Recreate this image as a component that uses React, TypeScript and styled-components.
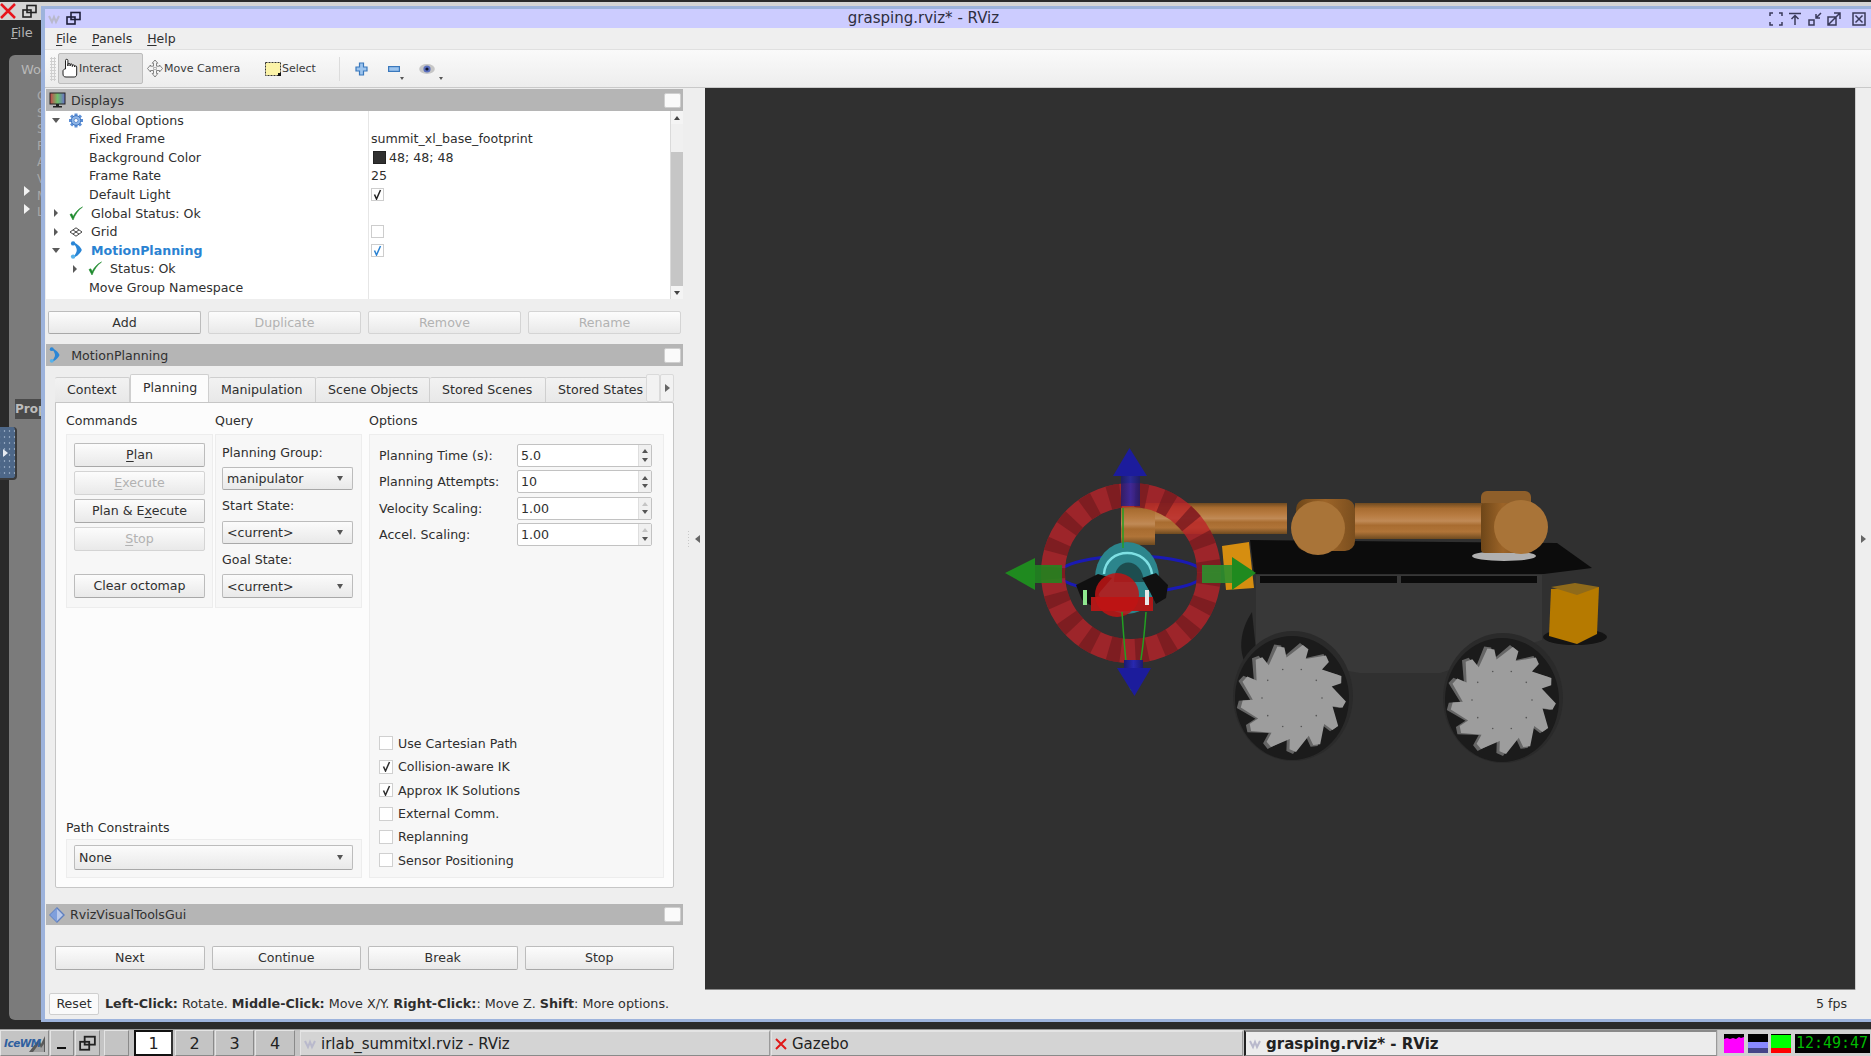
import React from "react";
import styled, { createGlobalStyle } from "styled-components";

const GlobalStyle = createGlobalStyle`
  html, body { margin: 0; padding: 0; overflow: hidden; background: #2a2a2a; }
  * { box-sizing: border-box; }
  body { font-family: "DejaVu Sans", "Liberation Sans", sans-serif; font-size: 12.6px; color: #2e2e2e; }
`;

const Desktop = styled.div`
  width: 1871px;
  height: 1056px;
  display: flex;
  flex-direction: column;
  background: #2a2a2a;
  overflow: hidden;
`;
const Stage = styled.div`
  position: relative;
  flex: 1;
`;

/* window behind the main one, only its left edge shows */
const BackWindow = styled.div`
  position: absolute;
  inset: 2px 0 0 0;
  display: flex;
  flex-direction: column;
`;
const BackTitle = styled.div`
  height: 18px;
  background: #d4d4d4;
  display: flex;
  align-items: center;
  gap: 4px;
`;
const BackMenu = styled.div`
  height: 35px;
  padding: 4px 0 0 11px;
  color: #b4b4b4;
  font-size: 13px;
  line-height: 17px;
  u { text-decoration-thickness: 1px; }
`;
const BackPanel = styled.div`
  position: relative;
  margin-left: 9px;
  width: 32px;
  height: 965px;
  background: #7b7b7b;
  border-radius: 6px 0 0 6px;
  padding: 6px 0 0 12px;
  color: #b8b8b8;
  font-size: 13px;
  line-height: 17px;
  overflow: hidden;
`;
const BackList = styled.div`
  margin: 10px 0 0 16px;
  font-size: 12px;
  line-height: 16.6px;
  color: #a8a8a8;
`;
const BackArrows = styled.div`
  position: absolute;
  left: 15px;
  top: 131px;
  display: flex;
  flex-direction: column;
  gap: 8px;
`;
const WhiteArrow = styled.span`
  display: block;
  width: 0;
  height: 0;
  border-left: 6px solid #f2f2f2;
  border-top: 5px solid transparent;
  border-bottom: 5px solid transparent;
`;
const PropTag = styled.div`
  position: absolute;
  left: 6px;
  top: 344px;
  width: 26px;
  height: 20px;
  background: #4a4a4a;
  color: #bcbcbc;
  font-weight: bold;
  font-size: 12px;
  line-height: 20px;
  overflow: hidden;
`;
const SideHandle = styled.div`
  position: absolute;
  left: 0;
  top: 427px;
  width: 17px;
  height: 53px;
  background:
    radial-gradient(#8ea3bd 0.9px, transparent 1.1px) 2px 1px / 5px 6px,
    #4d6788;
  border-radius: 0 4px 4px 0;
  border-right: 2px solid #3a3a3a;
  border-bottom: 2px solid #3a3a3a;
  display: flex;
  align-items: center;
  justify-content: center;
  padding-right: 5px;
  &::after {
    content: "";
    border-left: 5px solid #e6ebf2;
    border-top: 4px solid transparent;
    border-bottom: 4px solid transparent;
  }
`;

/* main rviz window */
const MainWindow = styled.div`
  position: absolute;
  left: 41px;
  top: 6px;
  right: 0;
  height: 1016px;
  display: flex;
  flex-direction: column;
  background: #eeeeee;
  border-top: 3px solid #9db3dc;
  border-left: 4px solid #9db3dc;
  border-bottom: 3px solid #9db3dc;
`;
const TitleBar = styled.div`
  position: relative;
  height: 19px;
  flex: none;
  background: #ccccff;
  display: flex;
  align-items: center;
  justify-content: space-between;
  padding: 0 5px 0 3px;
`;
const TitleText = styled.div`
  position: absolute;
  left: 0;
  right: 69px;
  top: 0;
  text-align: center;
  font-size: 15px;
  line-height: 19px;
  color: #2e2e3e;
`;
const TitleGroup = styled.div`
  display: flex;
  align-items: center;
  gap: ${(p: { $gap?: number }) => p.$gap ?? 6}px;
`;
const MenuBar = styled.div`
  height: 22px;
  flex: none;
  display: flex;
  align-items: center;
  background: #efefef;
  border-bottom: 1px solid #e0e0e0;
  padding-left: 11px;
  font-size: 12.5px;
  gap: 15px;
  u { text-decoration-thickness: 1px; text-underline-offset: 2px; }
`;
const Toolbar = styled.div`
  height: 38px;
  flex: none;
  display: flex;
  align-items: center;
  background: linear-gradient(#fafafa, #ededed);
  border-bottom: 1px solid #c9c9c9;
  padding-left: 5px;
  font-size: 11px;
  color: #3a3a3a;
`;
const Grip = styled.div`
  width: 6px;
  height: 24px;
  margin-right: 2px;
  background-image: radial-gradient(#cfcfcf 1px, transparent 1.2px);
  background-size: 3px 3px;
`;
const ToolButton = styled.div<{ $active?: boolean; $w: number }>`
  width: ${(p) => p.$w}px;
  height: 31px;
  display: flex;
  align-items: center;
  gap: ${(p) => (p.$active ? 0 : 1)}px;
  padding-left: 3px;
  border-radius: 2px;
  background: ${(p) => (p.$active ? "#dcdcdc" : "transparent")};
  border: 1px solid ${(p) => (p.$active ? "#bdbdbd" : "transparent")};
`;
const ToolSep = styled.div`
  width: 1px;
  height: 24px;
  margin: 0 15px 0 0;
  background: #dcdcdc;
`;
const IconTool = styled.div<{ $w: number }>`
  position: relative;
  width: ${(p) => p.$w}px;
  height: 22px;
  display: flex;
  align-items: center;
`;
const MiniDrop = styled.span`
  position: absolute;
  right: ${(p: { $r?: number }) => p.$r ?? 0}px;
  bottom: 0;
  border-top: 3px solid #555;
  border-left: 2.5px solid transparent;
  border-right: 2.5px solid transparent;
`;

const Body = styled.div`
  flex: 1;
  display: flex;
  min-height: 0;
`;
const Panels = styled.div`
  width: 638px;
  flex: none;
  padding-left: 1px;
  display: flex;
  flex-direction: column;
`;
const DockHeader = styled.div<{ $top?: number; $h?: number }>`
  height: ${(p) => p.$h ?? 22}px;
  flex: none;
  margin-top: ${(p) => p.$top ?? 0}px;
  display: flex;
  align-items: center;
  background: #b5b5b5;
  padding: 0 2px 0 3px;
  color: #303030;
`;
const DockTitle = styled.span<{ $left?: number }>`
  flex: 1;
  margin-left: ${(p) => p.$left ?? 5}px;
`;
const DockClose = styled.span`
  width: 17px;
  height: 15px;
  background: #fafafa;
  border: 1px solid #cfcfcf;
  border-radius: 2px;
`;

const TreeView = styled.div`
  height: 188px;
  flex: none;
  display: flex;
  background: #ffffff;
`;
const TreeGrid = styled.div`
  flex: 1;
  display: grid;
  grid-template-columns: 322px 1fr;
  grid-auto-rows: 18.55px;
  background: linear-gradient(#e6e6e6, #e6e6e6) 322px 0 / 1px 100% no-repeat;
`;
const TreeName = styled.div<{ $pad: number; $blue?: boolean }>`
  display: flex;
  align-items: center;
  padding-left: ${(p) => p.$pad}px;
  white-space: nowrap;
  font-weight: ${(p) => (p.$blue ? "bold" : "normal")};
  color: ${(p) => (p.$blue ? "#2a82d2" : "#303030")};
`;
const TreeValue = styled.div`
  display: flex;
  align-items: center;
  padding-left: 3px;
  white-space: nowrap;
`;
const Twist = styled.span<{ $open?: boolean }>`
  width: 16px;
  height: 16px;
  flex: none;
  display: flex;
  align-items: center;
  justify-content: center;
  &::after {
    content: "";
    ${(p) =>
      p.$open
        ? `border-top: 5px solid #5a5a5a; border-left: 4px solid transparent; border-right: 4px solid transparent;`
        : `border-left: 4px solid #5a5a5a; border-top: 4px solid transparent; border-bottom: 4px solid transparent;`}
  }
`;
const TreeIcon = styled.span`
  width: 16px;
  height: 16px;
  flex: none;
  margin: 0 7px 0 4px;
  display: flex;
  align-items: center;
  justify-content: center;
`;
const Swatch = styled.span`
  width: 13px;
  height: 13px;
  margin: 0 3px 0 2px;
  background: #303030;
  border: 1px solid #222;
`;
const TreeCheck = styled.span<{ $blue?: boolean }>`
  width: 13px;
  height: 13px;
  background: #fff;
  border: 1px solid #cdcdcd;
  display: flex;
  align-items: center;
  justify-content: center;
  color: ${(p) => (p.$blue ? "#2a82d2" : "#222")};
`;
const ScrollBar = styled.div`
  width: 13px;
  flex: none;
  display: flex;
  flex-direction: column;
  background: #c6c6c6;
  border-left: 1px solid #dadada;
`;
const ScrollEnd = styled.div<{ $down?: boolean }>`
  height: 13px;
  background: #f4f4f4;
  display: flex;
  align-items: center;
  justify-content: center;
  &::after {
    content: "";
    border-left: 3.5px solid transparent;
    border-right: 3.5px solid transparent;
    ${(p) => (p.$down ? "border-top: 4px solid #444;" : "border-bottom: 4px solid #444;")}
  }
`;
const ScrollThumb = styled.div`
  height: 28px;
  background: #f0f0f0;
`;
const ScrollTrack = styled.div`
  flex: 1;
`;

const ButtonRow = styled.div<{ $top: number; $side: number; $h: number }>`
  flex: none;
  height: ${(p) => p.$h}px;
  margin: ${(p) => p.$top}px ${(p) => p.$side}px 0 ${(p) => p.$side}px;
  display: grid;
  grid-template-columns: repeat(4, 1fr);
  gap: 7px;
`;
const PushButton = styled.div<{ $off?: boolean; $h?: number; $top?: number }>`
  height: ${(p) => (p.$h ? `${p.$h}px` : "auto")};
  margin-top: ${(p) => p.$top ?? 0}px;
  display: flex;
  align-items: center;
  justify-content: center;
  padding-bottom: 1px;
  background: linear-gradient(#fcfcfc, #e9e9e9);
  border: 1px solid #bcbcbc;
  border-bottom-color: #a8a8a8;
  border-radius: 2px;
  color: ${(p) => (p.$off ? "#b2b2b2" : "#303030")};
  ${(p) => (p.$off ? "border-color: #d4d4d4;" : "")}
  white-space: nowrap;
  u { text-decoration-thickness: 1px; text-underline-offset: 2px; }
`;

const TabArea = styled.div`
  flex: none;
  margin: 8px 9px 0 9px;
  height: 514px;
  display: flex;
  flex-direction: column;
`;
const TabBar = styled.div`
  height: 28px;
  flex: none;
  display: flex;
  align-items: flex-end;
`;
const TabStrip = styled.div`
  width: 591px;
  display: flex;
  align-items: flex-end;
  overflow: hidden;
  height: 29px;
  margin-bottom: -1px;
`;
const Tab = styled.div<{ $on?: boolean; $w: number }>`
  width: ${(p) => p.$w}px;
  flex: none;
  height: ${(p) => (p.$on ? 29 : 26)}px;
  display: flex;
  align-items: center;
  padding-left: 12px;
  white-space: nowrap;
  background: ${(p) => (p.$on ? "#fcfcfc" : "linear-gradient(#f2f2f2, #e8e8e8)")};
  border: 1px solid #cfcfcf;
  border-bottom: ${(p) => (p.$on ? "none" : "1px solid #c4c4c4")};
  border-left: ${(p) => (p.$on ? "1px solid #cfcfcf" : "none")};
  border-radius: 2px 2px 0 0;
  padding-bottom: ${(p) => (p.$on ? 3 : 2)}px;
`;
const TabScroll = styled.div<{ $off?: boolean }>`
  width: 14px;
  height: 28px;
  flex: none;
  background: #f2f2f2;
  border: 1px solid #dadada;
  border-radius: 2px;
  display: flex;
  align-items: center;
  justify-content: center;
`;
const TabPane = styled.div`
  flex: 1;
  display: grid;
  grid-template-columns: 296px 295px;
  column-gap: 7px;
  padding: 9px 10px 9px 10px;
  background: #fcfcfc;
  border: 1px solid #c6c6c6;
  border-radius: 0 2px 2px 2px;
  min-height: 0;
`;
const LeftColumn = styled.div`
  display: flex;
  flex-direction: column;
  justify-content: space-between;
`;
const TopGroups = styled.div`
  display: grid;
  grid-template-columns: 147px 147px;
  gap: 2px;
`;
const GroupColumn = styled.div`
  display: flex;
  flex-direction: column;
`;
const GroupLabel = styled.div<{ $line?: number }>`
  height: 22px;
  line-height: ${(p) => p.$line ?? 18}px;
`;
const GroupBox = styled.div`
  background: #f7f7f7;
  border: 1px solid #ededed;
`;
const CommandBox = styled(GroupBox)`
  height: 174px;
  padding: 8px 7px;
  display: flex;
  flex-direction: column;
  gap: 4px;
`;
const QueryBox = styled(GroupBox)`
  height: 174px;
  padding: 2px 8px 0 6px;
  display: flex;
  flex-direction: column;
`;
const FieldLabel = styled.div<{ $h: number }>`
  height: ${(p) => p.$h}px;
  display: flex;
  align-items: center;
`;
const Combo = styled.div<{ $h?: number }>`
  height: ${(p) => p.$h ?? 24}px;
  flex: none;
  display: flex;
  align-items: center;
  justify-content: space-between;
  padding: 0 9px 0 4px;
  background: linear-gradient(#fbfbfb, #e9e9e9);
  border: 1px solid #bcbcbc;
  border-bottom-color: #a8a8a8;
  border-radius: 2px;
  &::after {
    content: "";
    border-top: 5px solid #555;
    border-left: 3.5px solid transparent;
    border-right: 3.5px solid transparent;
  }
`;
const PathBox = styled(GroupBox)`
  height: 39px;
  padding: 5px 8px 0 7px;
`;
const OptionsColumn = styled.div`
  display: flex;
  flex-direction: column;
`;
const OptionsBox = styled(GroupBox)`
  flex: 1;
  display: flex;
  flex-direction: column;
  justify-content: space-between;
  padding: 9px 10px 5px 9px;
`;
const SpinGrid = styled.div`
  display: grid;
  grid-template-columns: 138px 135px;
  grid-auto-rows: 23px;
  row-gap: 3.3px;
  align-items: center;
`;
const SpinBox = styled.div`
  height: 23px;
  display: flex;
  background: #fff;
  border: 1px solid #c2c2c2;
  border-radius: 2px;
`;
const SpinValue = styled.div`
  flex: 1;
  display: flex;
  align-items: center;
  padding-left: 3px;
`;
const SpinArrows = styled.div`
  width: 13px;
  display: flex;
  flex-direction: column;
  justify-content: space-evenly;
  align-items: center;
  background: #f0f0f0;
  border-left: 1px solid #dedede;
`;
const SpinUp = styled.span<{ $off?: boolean }>`
  border-bottom: 4px solid ${(p) => (p.$off ? "#c4c4c4" : "#555")};
  border-left: 3px solid transparent;
  border-right: 3px solid transparent;
`;
const SpinDown = styled.span`
  border-top: 4px solid #555;
  border-left: 3px solid transparent;
  border-right: 3px solid transparent;
`;
const CheckList = styled.div`
  display: grid;
  grid-auto-rows: 23.4px;
`;
const CheckRow = styled.div`
  display: flex;
  align-items: center;
  gap: 5px;
`;
const CheckMark = styled.span`
  width: 14px;
  height: 14px;
  flex: none;
  background: #fff;
  border: 1px solid #d0d0d0;
  display: flex;
  align-items: center;
  justify-content: center;
`;

const HandleColumn = styled.div`
  width: 22px;
  flex: none;
  display: flex;
  align-items: center;
  justify-content: flex-end;
  gap: 5px;
  padding-right: 5px;
`;
const HandleDots = styled.span`
  width: 3px;
  height: 18px;
  background-image: radial-gradient(#c8c8c8 0.8px, transparent 1px);
  background-size: 3px 3px;
`;
const LeftHandle = styled.span`
  border-right: 5px solid #666;
  border-top: 4px solid transparent;
  border-bottom: 4px solid transparent;
`;
const RightHandle = styled.span`
  border-left: 5px solid #666;
  border-top: 4px solid transparent;
  border-bottom: 4px solid transparent;
`;
const Canvas = styled.div`
  width: 1150px;
  flex: none;
  background: #303030;
  border-bottom: 1px solid #8a8a8a;
  svg { display: block; }
`;
const RightDock = styled.div`
  flex: 1;
  display: flex;
  align-items: center;
  justify-content: center;
  border-left: 1px solid #cccccc;
`;

const StatusBar = styled.div`
  height: 29px;
  flex: none;
  display: flex;
  align-items: center;
  padding: 0 24px 2px 4px;
  background: #eeeeee;
`;
const ResetButton = styled.div`
  width: 50px;
  height: 22px;
  display: flex;
  align-items: center;
  justify-content: center;
  background: #fafafa;
  border: 1px solid #cfcfcf;
  border-radius: 2px;
  margin-right: 6px;
`;
const Hint = styled.div`
  flex: 1;
  font-size: 12.75px;
  white-space: nowrap;
`;
const Fps = styled.div`
  white-space: nowrap;
`;

/* icewm task bar */
const Taskbar = styled.div`
  height: 27px;
  flex: none;
  display: flex;
  background: #c4c4c4;
  border-top: 1px solid #9a9a9a;
  font-size: 15px;
  color: #222;
`;
const TaskCell = styled.div<{ $w: number; $gap?: number }>`
  width: ${(p) => p.$w}px;
  flex: none;
  margin-right: ${(p) => p.$gap ?? 1}px;
  display: flex;
  align-items: center;
  justify-content: center;
  background: #c4c4c4;
  border-top: 1px solid #e4e4e4;
  border-left: 1px solid #e4e4e4;
  border-bottom: 1px solid #8a8a8a;
  border-right: 1px solid #8a8a8a;
  position: relative;
`;
const LogoCell = styled(TaskCell)`
  justify-content: flex-start;
  padding-left: 3px;
  overflow: hidden;
  svg { position: absolute; right: 1px; top: 3px; }
`;
const Logo = styled.span`
  position: relative;
  z-index: 1;
  font-size: 10.5px;
  font-weight: bold;
  font-style: italic;
  color: #2f5f9f;
  letter-spacing: -0.5px;
`;
const WorkButton = styled(TaskCell)<{ $on?: boolean }>`
  background: ${(p) => (p.$on ? "#ffffff" : "#c4c4c4")};
  ${(p) => (p.$on ? "border: 2px solid #111; border-right-color: #333;" : "")}
  font-size: 16px;
`;
const TaskButton = styled.div<{ $w: number; $on?: boolean }>`
  width: ${(p) => p.$w}px;
  flex: none;
  margin-right: 1px;
  display: flex;
  align-items: center;
  gap: 5px;
  padding-left: 3px;
  white-space: nowrap;
  background: ${(p) => (p.$on ? "#ececec" : "#d4d4d4")};
  font-weight: ${(p) => (p.$on ? "bold" : "normal")};
  font-size: 15px;
  border-top: 2px solid ${(p) => (p.$on ? "#8a8a8a" : "#e4e4e4")};
  border-left: ${(p) => (p.$on ? "2px solid #222" : "1px solid #e4e4e4")};
  border-right: 1px solid #9a9a9a;
  border-bottom: 1px solid #8a8a8a;
`;
const Tray = styled.div`
  flex: 1;
  display: flex;
  align-items: center;
  gap: 3.5px;
  padding-left: 6px;
  background: #d0d0d0;
`;
const Clock = styled.div`
  width: 75px;
  height: 19px;
  background: #000;
  color: #00bb00;
  font-family: "DejaVu Sans Mono", monospace;
  font-size: 15px;
  line-height: 19px;
  text-align: center;
  white-space: nowrap;
`;

/* ---------- small drawings ---------- */
const FaintLogo = () => (
  <svg width="12" height="12" viewBox="0 0 12 12">
    <path d="M1 3l3 6 2-5 2 5 3-6" fill="none" stroke="#b9b9cc" strokeWidth="2" />
  </svg>
);
const RestoreIcon = ({ s = 15, c = "#1e1e3a" }: { s?: number; c?: string }) => (
  <svg width={s} height={s} viewBox="0 0 15 15">
    <rect x="5" y="1.500" width="9" height="7" fill="none" stroke={c} strokeWidth="1.600" />
    <rect x="1" y="6" width="8" height="7" fill="none" stroke={c} strokeWidth="1.600" />
  </svg>
);
const TitleButton = ({ d, $left }: { d: string; $left?: number }) => (
  <svg width="14" height="14" viewBox="0 0 14 14" style={$left ? { marginLeft: $left } : undefined}>
    <path d={d} fill="none" stroke="#3a3a5a" strokeWidth="1.500" />
  </svg>
);
const HandIcon = () => (
  <svg width="17" height="21" viewBox="0 0 17 21">
    <path
      d="M3.500 11V2.500a1.200 1.200 0 0 1 2.400 0V8V6.500a1.100 1.100 0 0 1 2.200 0V8V7a1.100 1.100 0 0 1 2.200 0V8.500V8a1.100 1.100 0 0 1 2.200 0v1a1.100 1.100 0 0 1 2.200 0v7c0 2-1 3-2.500 3H4C2 19 1 18 1 16v-3c0-1 1-2 2.500-2z"
      fill="#fff"
      stroke="#222"
      strokeWidth="1"
    />
  </svg>
);
const MoveIcon = () => (
  <svg width="16" height="19" viewBox="0 0 16 19">
    <path
      d="M8 1l2.800 3.200H9.500v3h3V6l3 3.500-3 3.500v-1.500h-3v3h1.300L8 18l-2.800-3.500h1.300v-3h-3V13l-3-3.500 3-3.500v1.200h3v-3H5.200z"
      fill="#f4f4f4"
      stroke="#777"
      strokeWidth="0.900"
    />
    <path d="M6.500 8.500h3v2h-3z" fill="none" stroke="#999" strokeWidth="0.700" />
  </svg>
);
const SelectIcon = () => (
  <svg width="16" height="14" viewBox="0 0 16 14">
    <rect x="0.500" y="0.500" width="15" height="13" fill="#fbf3a8" stroke="#333" strokeDasharray="2 1" />
    <rect x="13" y="11" width="3" height="3" fill="#111" />
  </svg>
);
const PlusIcon = () => (
  <svg width="13" height="14" viewBox="0 0 13 14">
    <path d="M4.500 1h4v4h3.500v4H8.500v4h-4V9H1V5h3.500z" fill="#9cc4ee" stroke="#3a78bc" strokeWidth="1.200" />
  </svg>
);
const MinusIcon = () => (
  <svg width="12" height="6" viewBox="0 0 12 6">
    <rect x="0.600" y="0.600" width="10.800" height="4.800" fill="#9cc4ee" stroke="#3a78bc" strokeWidth="1.200" />
  </svg>
);
const EyeIcon = () => (
  <svg width="16" height="12" viewBox="0 0 16 12">
    <ellipse cx="8" cy="6" rx="7.800" ry="5" fill="#c6c6c6" />
    <circle cx="8" cy="6" r="3.600" fill="#5a6fbe" />
    <circle cx="8" cy="6" r="1.600" fill="#10142e" />
  </svg>
);
const MonitorIcon = () => (
  <svg width="17" height="17" viewBox="0 0 17 17">
    <defs>
      <linearGradient id="mon" x1="0" x2="1">
        <stop offset="0" stopColor="#c8444a" />
        <stop offset="0.500" stopColor="#6fbf6a" />
        <stop offset="1" stopColor="#6a6fc8" />
      </linearGradient>
    </defs>
    <rect x="1" y="1" width="15" height="11" fill="url(#mon)" stroke="#222" />
    <rect x="7" y="12" width="3" height="2" fill="#222" />
    <rect x="4" y="14" width="9" height="1.500" fill="#222" />
  </svg>
);
const GearIcon = () => {
  const teeth = [0, 45, 90, 135];
  return (
    <svg width="14" height="15" viewBox="0 0 14 15">
      {teeth.map((a) => (
        <rect key={a} x="5.500" y="0.500" width="3" height="14" fill="#5c8fd6" transform={`rotate(${a} 7 7.500)`} />
      ))}
      <circle cx="7" cy="7.500" r="4.800" fill="#8db5e8" stroke="#3f74c0" />
      <circle cx="7" cy="7.500" r="2" fill="#fff" stroke="#3f74c0" strokeWidth="0.700" />
    </svg>
  );
};
const CheckIcon = () => (
  <svg width="14" height="15" viewBox="0 0 14 15">
    <path d="M1 8.500l3 5.500C6 9 9 4 13.500 1C9 3 6 7 4.200 10.500L2.800 7.800z" fill="#1c8a2c" stroke="#1c8a2c" strokeWidth="0.600" />
  </svg>
);
const GridIcon = () => (
  <svg width="14" height="10" viewBox="0 0 14 10">
    <path d="M7 .8L13 5 7 9.200 1 5zM4 2.900L10 7.100M10 2.900L4 7.100" fill="none" stroke="#444" strokeWidth="1" />
  </svg>
);
const PlanningIcon = ({ s = 18 }: { s?: number }) => (
  <svg width={s * 0.7} height={s} viewBox="0 0 12 18">
    <path d="M2.500 1C7 2.500 10.500 6 11.500 9c-1 3-4.500 6.500-9 8C5 13.500 6.500 11 6.500 9 6.500 7 5 4.500 2.500 1z" fill="#2a86d6" />
    <circle cx="2.800" cy="2.400" r="2.200" fill="#2a86d6" />
    <circle cx="2.800" cy="15.600" r="2.200" fill="#57b2ea" />
  </svg>
);
const DiamondIcon = () => (
  <svg width="16" height="16" viewBox="0 0 16 16">
    <path d="M8 1l7 7-7 7-7-7z" fill="#b9c9ea" stroke="#5f7fbf" strokeWidth="1.400" />
    <path d="M8 1L1 8l7 7z" fill="#7f9fdc" />
  </svg>
);
const Tick = ({ s = 11 }: { s?: number }) => (
  <svg width={s} height={s} viewBox="0 0 11 11">
    <path d="M2.500 5.500L4.500 10 8.500 1" fill="none" stroke="currentColor" strokeWidth="1.500" />
  </svg>
);
const CpuGraph = ({ fill, low, top }: { fill: string; low?: string; top: string }) => (
  <svg width="20" height="19" viewBox="0 0 20 19">
    <rect width="20" height="19" fill={fill} />
    <path d={top} fill="#000" />
    {low ? <rect y="14" width="20" height="5" fill={low} /> : null}
  </svg>
);
const IceSwoosh = () => (
  <svg width="18" height="20" viewBox="0 0 18 20">
    <path d="M0 18L10 5l2 5 4-8v16z" fill="#5a5a5a" />
    <path d="M4 18L10 10l2 4 3-4v8z" fill="#a0a0a0" />
  </svg>
);

/* ---------- 3d view ---------- */
const gear = (cx: number, cy: number, rx: number, ry: number, n: number, inner: number) => {
  const pts: string[] = [];
  for (let i = 0; i < n; i++) {
    const a = (i / n) * Math.PI * 2 + 0.2;
    const step = (Math.PI * 2) / n;
    const b = a + step * 0.72;
    const c = a + step * 0.98;
    pts.push(`${(cx + rx * inner * Math.cos(a)).toFixed(1)},${(cy + ry * inner * Math.sin(a)).toFixed(1)}`);
    pts.push(`${(cx + rx * Math.cos(b)).toFixed(1)},${(cy + ry * Math.sin(b)).toFixed(1)}`);
    pts.push(`${(cx + rx * 0.95 * Math.cos(c)).toFixed(1)},${(cy + ry * 0.95 * Math.sin(c)).toFixed(1)}`);
  }
  return pts.join(" ");
};

const Wheel = ({ cx, cy }: { cx: number; cy: number }) => (
  <g>
    <ellipse cx={cx + 1} cy={cy - 2} rx={60} ry={65} fill="#2a2a2a" />
    <ellipse cx={cx} cy={cy} rx={57} ry={62} fill="#1b1b1b" />
    <polygon points={gear(cx - 2, cy, 54, 56, 13, 0.74)} fill="#666666" />
    <polygon points={gear(cx + 1, cy, 53, 54, 13, 0.76)} fill="#9d9d9d" />
    {[0, 1, 2, 3, 4, 5, 6, 7, 8, 9].map((i) => {
      const a = (i / 10) * Math.PI * 2;
      return <circle key={i} cx={cx + 30 * Math.cos(a)} cy={cy + 30 * Math.sin(a)} r="0.800" fill="#555" />;
    })}
  </g>
);

const Robot = () => (
  <svg width="1150" height="901" viewBox="705 88 1150 901">
    <defs>
      <linearGradient id="tube" x1="0" x2="0" y1="0" y2="1">
        <stop offset="0" stopColor="#6f4a20" />
        <stop offset="0.150" stopColor="#a86c30" />
        <stop offset="0.350" stopColor="#b87c42" />
        <stop offset="0.500" stopColor="#c08a56" />
        <stop offset="0.620" stopColor="#a86c30" />
        <stop offset="0.800" stopColor="#b07438" />
        <stop offset="1" stopColor="#6e4a20" />
      </linearGradient>
      <linearGradient id="joint" x1="0" x2="1">
        <stop offset="0" stopColor="#6e4618" />
        <stop offset="0.500" stopColor="#9c6428" />
        <stop offset="1" stopColor="#7a4e1e" />
      </linearGradient>
      <linearGradient id="blueShaft" x1="0" x2="1">
        <stop offset="0" stopColor="#1a1a70" />
        <stop offset="0.500" stopColor="#2828b0" />
        <stop offset="1" stopColor="#1a1a70" />
      </linearGradient>
    </defs>

    {/* base */}
    <polygon points="1256,575 1542,575 1542,640 1440,673 1360,673 1256,655" fill="#383838" />
    <polygon points="1222,546 1249,542 1254,588 1226,590" fill="#d68e10" />
    <polygon points="1250,540 1557,543 1592,568 1544,574 1254,574" fill="#0c0c0c" />
    <rect x="1260" y="576" width="137" height="7" fill="#0b0b0b" />
    <rect x="1401" y="576" width="136" height="7" fill="#0b0b0b" />
    <ellipse cx="1575" cy="637" rx="32" ry="8" fill="#141414" />
    <polygon points="1551,589 1599,587 1597,634 1577,644 1549,636" fill="#b67a00" />
    <polygon points="1551,587 1575,583 1599,587 1577,595" fill="#8f6a1a" />
    <path d="M1252 612 C1240 630 1238 650 1246 665 L1256 650 Z" fill="#1a1a1a" />
    <Wheel cx={1292} cy={698} />
    <Wheel cx={1502} cy={700} />

    {/* arm */}
    <ellipse cx="1504" cy="556" rx="32" ry="5" fill="#b0b0b0" />
    <rect x="1481" y="491" width="50" height="18" rx="6" fill="#8f5f2a" />
    <rect x="1155" y="503" width="132" height="31" fill="url(#tube)" />
    <rect x="1355" y="503" width="128" height="36" fill="url(#tube)" />
    <rect x="1296" y="499" width="59" height="52" rx="10" fill="url(#joint)" />
    <rect x="1481" y="503" width="44" height="50" rx="4" fill="url(#joint)" />
    <ellipse cx="1318" cy="528" rx="27" ry="27" fill="#a97438" />
    <ellipse cx="1521" cy="527" rx="27" ry="27" fill="#a97438" />
    <rect x="1121" y="503" width="34" height="42" fill="url(#tube)" />

    {/* interaction ring behind the gripper */}
    <ellipse cx="1131" cy="574" rx="72" ry="18" fill="none" stroke="#1a1ab4" strokeWidth="3" />

    {/* gripper and dome */}
    <ellipse cx="1127" cy="578" rx="32" ry="36" fill="#2c858c" />
    <path d="M1104 574 C1106 546 1148 546 1152 574" fill="none" stroke="#7fe0e4" strokeWidth="2.500" />
    <path d="M1114 582 C1114 556 1142 556 1144 582 Z" fill="#1d4d4f" />
    <polygon points="1076,585 1098,574 1112,578 1100,592 1092,606 1082,600" fill="#101010" />
    <polygon points="1168,585 1156,573 1142,578 1150,592 1156,604 1166,598" fill="#101010" />
    <rect x="1091" y="597" width="62" height="14" fill="#b01818" />
    <rect x="1145" y="590" width="4" height="15" fill="#e8e8e8" />
    <rect x="1083" y="590" width="4" height="15" fill="#8fe88f" />
    <circle cx="1117" cy="595" r="22" fill="#c01414" opacity="0.850" />

    {/* ring, arrows */}
    <circle cx="1131" cy="573" r="78" fill="none" stroke="#bc2229" strokeWidth="24" opacity="0.780" />
    <circle cx="1131" cy="573" r="78" fill="none" stroke="#701a1e" strokeWidth="24" strokeDasharray="12 14.500" opacity="0.700" />
    <path d="M1123 508 L1123 548M1122 612 Q1128 704 1134 688 Q1142 668 1146 612" fill="none" stroke="#22a022" strokeWidth="1.500" />
    <rect x="1121" y="476" width="19" height="30" fill="url(#blueShaft)" opacity="0.800" />
    <polygon points="1129.500,448 1147,476 1113,476" fill="#1c1c9c" />
    <rect x="1124" y="660" width="19" height="10" fill="url(#blueShaft)" />
    <polygon points="1134.500,696 1151,668 1117,668" fill="#1c1c9c" />
    <rect x="1030" y="565" width="32" height="18" fill="#1f8a1f" opacity="0.850" />
    <polygon points="1005,573 1035,558 1035,590" fill="#1f8a1f" />
    <rect x="1202" y="565" width="32" height="18" fill="#2e8f2e" opacity="0.900" />
    <polygon points="1256,573 1232,557 1232,590" fill="#1f8a1f" />
  </svg>
);

/* ---------- data ---------- */
type TreeRow = {
  name: string;
  pad: number;
  twist?: "open" | "closed";
  icon?: React.ReactNode;
  blue?: boolean;
  value?: React.ReactNode;
};

const treeRows: TreeRow[] = [
  { name: "Global Options", pad: 2, twist: "open", icon: <GearIcon /> },
  { name: "Fixed Frame", pad: 43, value: "summit_xl_base_footprint" },
  { name: "Background Color", pad: 43, value: <><Swatch />48; 48; 48</> },
  { name: "Frame Rate", pad: 43, value: "25" },
  { name: "Default Light", pad: 43, value: <TreeCheck><Tick /></TreeCheck> },
  { name: "Global Status: Ok", pad: 2, twist: "closed", icon: <CheckIcon /> },
  { name: "Grid", pad: 2, twist: "closed", icon: <GridIcon />, value: <TreeCheck /> },
  {
    name: "MotionPlanning",
    pad: 2,
    twist: "open",
    icon: <PlanningIcon />,
    blue: true,
    value: <TreeCheck $blue><Tick /></TreeCheck>,
  },
  { name: "Status: Ok", pad: 21, twist: "closed", icon: <CheckIcon /> },
  { name: "Move Group Namespace", pad: 43 },
];

const tabs = [
  { label: "Context", w: 75 },
  { label: "Planning", w: 79, on: true },
  { label: "Manipulation", w: 107 },
  { label: "Scene Objects", w: 114 },
  { label: "Stored Scenes", w: 116 },
  { label: "Stored States", w: 110 },
];

const spins = [
  { label: "Planning Time (s):", value: "5.0" },
  { label: "Planning Attempts:", value: "10" },
  { label: "Velocity Scaling:", value: "1.00", upOff: true },
  { label: "Accel. Scaling:", value: "1.00", upOff: true },
];

const checks = [
  { label: "Use Cartesian Path" },
  { label: "Collision-aware IK", on: true },
  { label: "Approx IK Solutions", on: true },
  { label: "External Comm." },
  { label: "Replanning" },
  { label: "Sensor Positioning" },
];

export default function App() {
  return (
    <Desktop>
      <GlobalStyle />
      <Stage>
        <BackWindow>
          <BackTitle>
            <svg width="18" height="16" viewBox="0 0 18 16">
              <path d="M1 1l14 14M15 1L1 15" stroke="#e8141c" strokeWidth="2.500" />
            </svg>
            <RestoreIcon s={15} c="#222" />
          </BackTitle>
          <BackMenu><u>F</u>ile</BackMenu>
          <BackPanel>
            Wo
            <BackList>
              C<br />S<br />S<br />F<br />A<br />V<br />M<br />L
            </BackList>
            <BackArrows>
              <WhiteArrow />
              <WhiteArrow />
            </BackArrows>
            <PropTag>Prop</PropTag>
          </BackPanel>
        </BackWindow>
        <SideHandle />

        <MainWindow>
          <TitleBar>
            <TitleGroup $gap={6}>
              <FaintLogo />
              <RestoreIcon />
            </TitleGroup>
            <TitleText>grasping.rviz* - RViz</TitleText>
            <TitleGroup $gap={5.5}>
              <TitleButton d="M1 4V1h3M10 1h3v3M13 10v3h-3M4 13H1v-3" />
              <TitleButton d="M1 1.500h12M7 13V4M3.500 7L7 3.500 10.500 7" />
              <TitleButton d="M1 8h5v5H1zM8 6l5-5M8 2v4h4" />
              <TitleButton d="M1 5h8v8H1zM1 13l8-8M7 1h6v6M13 1L9 5" />
              <TitleButton $left={5.5} d="M1 1h12v12H1zM3.500 3.500l7 7M10.500 3.500l-7 7" />
            </TitleGroup>
          </TitleBar>
          <MenuBar>
            <span><u>F</u>ile</span>
            <span><u>P</u>anels</span>
            <span><u>H</u>elp</span>
          </MenuBar>
          <Toolbar>
            <Grip />
            <ToolButton $active $w={85}><HandIcon />Interact</ToolButton>
            <ToolButton $w={118}><MoveIcon />Move Camera</ToolButton>
            <ToolButton $w={78}><SelectIcon />Select</ToolButton>
            <ToolSep />
            <IconTool $w={33}><PlusIcon /></IconTool>
            <IconTool $w={31}><MinusIcon /><MiniDrop $r={15} /></IconTool>
            <IconTool $w={30}><EyeIcon /><MiniDrop $r={6} /></IconTool>
          </Toolbar>

          <Body>
            <Panels>
              <DockHeader $top={1}>
                <MonitorIcon />
                <DockTitle>Displays</DockTitle>
                <DockClose />
              </DockHeader>
              <TreeView>
                <TreeGrid>
                  {treeRows.map((r) => (
                    <React.Fragment key={r.name}>
                      <TreeName $pad={r.pad} $blue={r.blue}>
                        {r.twist ? <Twist $open={r.twist === "open"} /> : null}
                        {r.icon ? <TreeIcon>{r.icon}</TreeIcon> : null}
                        {r.name}
                      </TreeName>
                      <TreeValue>{r.value}</TreeValue>
                    </React.Fragment>
                  ))}
                </TreeGrid>
                <ScrollBar>
                  <ScrollEnd />
                  <ScrollThumb />
                  <ScrollTrack />
                  <ScrollEnd $down />
                </ScrollBar>
              </TreeView>
              <ButtonRow $top={12} $side={2} $h={23}>
                <PushButton>Add</PushButton>
                <PushButton $off>Duplicate</PushButton>
                <PushButton $off>Remove</PushButton>
                <PushButton $off>Rename</PushButton>
              </ButtonRow>

              <DockHeader $top={10}>
                <PlanningIcon s={16} />
                <DockTitle $left={11}>MotionPlanning</DockTitle>
                <DockClose />
              </DockHeader>
              <TabArea>
                <TabBar>
                  <TabStrip>
                    {tabs.map((t) => (
                      <Tab key={t.label} $w={t.w} $on={t.on}>{t.label}</Tab>
                    ))}
                  </TabStrip>
                  <TabScroll $off />
                  <TabScroll><RightHandle /></TabScroll>
                </TabBar>
                <TabPane>
                  <LeftColumn>
                    <TopGroups>
                      <GroupColumn>
                        <GroupLabel>Commands</GroupLabel>
                        <CommandBox>
                          <PushButton $h={24}><span><u>P</u>lan</span></PushButton>
                          <PushButton $h={24} $off><span><u>E</u>xecute</span></PushButton>
                          <PushButton $h={24}><span>Plan &amp; E<u>x</u>ecute</span></PushButton>
                          <PushButton $h={24} $off><span><u>S</u>top</span></PushButton>
                          <PushButton $h={24} $top={19}>Clear octomap</PushButton>
                        </CommandBox>
                      </GroupColumn>
                      <GroupColumn>
                        <GroupLabel>Query</GroupLabel>
                        <QueryBox>
                          <FieldLabel $h={30}>Planning Group:</FieldLabel>
                          <Combo $h={23}>manipulator</Combo>
                          <FieldLabel $h={31}>Start State:</FieldLabel>
                          <Combo $h={23}>&lt;current&gt;</Combo>
                          <FieldLabel $h={30}>Goal State:</FieldLabel>
                          <Combo>&lt;current&gt;</Combo>
                        </QueryBox>
                      </GroupColumn>
                    </TopGroups>
                    <GroupColumn>
                      <GroupLabel $line={22}>Path Constraints</GroupLabel>
                      <PathBox>
                        <Combo $h={25}>None</Combo>
                      </PathBox>
                    </GroupColumn>
                  </LeftColumn>
                  <OptionsColumn>
                    <GroupLabel>Options</GroupLabel>
                    <OptionsBox>
                      <SpinGrid>
                        {spins.map((s) => (
                          <React.Fragment key={s.label}>
                            <span>{s.label}</span>
                            <SpinBox>
                              <SpinValue>{s.value}</SpinValue>
                              <SpinArrows>
                                <SpinUp $off={s.upOff} />
                                <SpinDown />
                              </SpinArrows>
                            </SpinBox>
                          </React.Fragment>
                        ))}
                      </SpinGrid>
                      <CheckList>
                        {checks.map((c) => (
                          <CheckRow key={c.label}>
                            <CheckMark>{c.on ? <Tick /> : null}</CheckMark>
                            {c.label}
                          </CheckRow>
                        ))}
                      </CheckList>
                    </OptionsBox>
                  </OptionsColumn>
                </TabPane>
              </TabArea>

              <DockHeader $top={16} $h={21}>
                <DiamondIcon />
                <DockTitle>RvizVisualToolsGui</DockTitle>
                <DockClose />
              </DockHeader>
              <ButtonRow $top={21} $side={9} $h={24}>
                <PushButton>Next</PushButton>
                <PushButton>Continue</PushButton>
                <PushButton>Break</PushButton>
                <PushButton>Stop</PushButton>
              </ButtonRow>
            </Panels>
            <HandleColumn>
              <HandleDots />
              <LeftHandle />
            </HandleColumn>
            <Canvas>
              <Robot />
            </Canvas>
            <RightDock>
              <RightHandle />
            </RightDock>
          </Body>

          <StatusBar>
            <ResetButton>Reset</ResetButton>
            <Hint>
              <b>Left-Click:</b> Rotate. <b>Middle-Click:</b> Move X/Y. <b>Right-Click:</b>: Move Z. <b>Shift</b>: More options.
            </Hint>
            <Fps>5 fps</Fps>
          </StatusBar>
        </MainWindow>
      </Stage>

      <Taskbar>
        <LogoCell $w={49}>
          <IceSwoosh />
          <Logo>IceWM</Logo>
        </LogoCell>
        <TaskCell $w={24}>
          <svg width="12" height="14" viewBox="0 0 12 14"><rect x="1" y="11" width="9" height="2" fill="#111" /></svg>
        </TaskCell>
        <TaskCell $w={25} $gap={4}>
          <RestoreIcon s={17} c="#222" />
        </TaskCell>
        <TaskCell $w={25} $gap={5} />
        <WorkButton $w={39} $on $gap={2}>1</WorkButton>
        <WorkButton $w={39}>2</WorkButton>
        <WorkButton $w={39}>3</WorkButton>
        <WorkButton $w={40} $gap={5}>4</WorkButton>
        <TaskButton $w={470}><FaintLogo />irlab_summitxl.rviz - RViz</TaskButton>
        <TaskButton $w={472}>
          <svg width="12" height="12" viewBox="0 0 12 12"><path d="M1 1l10 10M11 1L1 11" stroke="#e01818" strokeWidth="2" /></svg>
          Gazebo
        </TaskButton>
        <TaskButton $w={473} $on><FaintLogo />grasping.rviz* - RViz</TaskButton>
        <Tray>
          <CpuGraph fill="#ff00ff" top="M0 0h20v3l-3 1-2-1-3 2-3-1-3 1-3-1-3 1z" />
          <CpuGraph fill="#8888ff" low="#444488" top="M0 0h20v8H0z" />
          <CpuGraph fill="#00ff00" low="#ff0000" top="M0 0h20v1H0z" />
          <Clock>12:49:47</Clock>
        </Tray>
      </Taskbar>
    </Desktop>
  );
}
